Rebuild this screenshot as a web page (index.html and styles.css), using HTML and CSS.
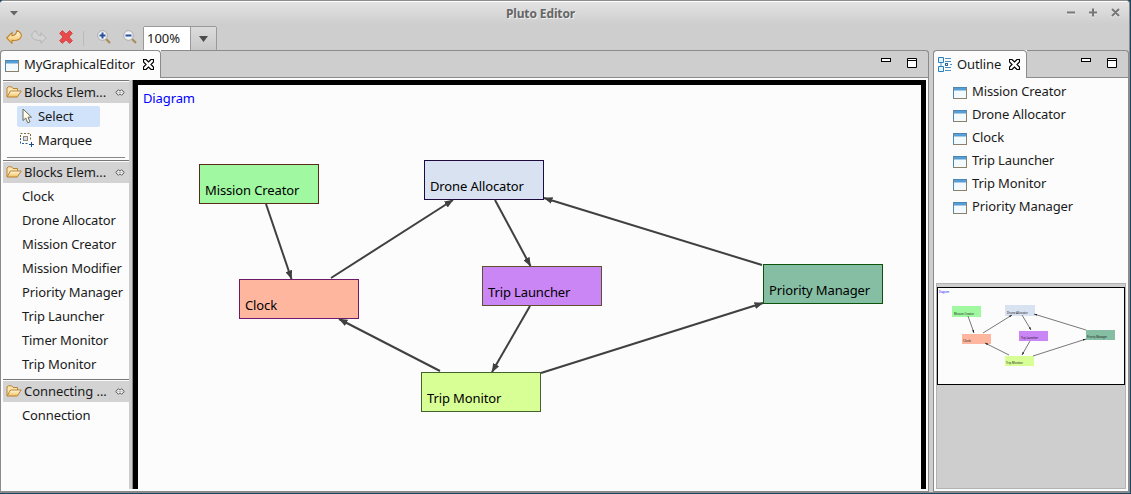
FILE: index.html
```html
<!DOCTYPE html>
<html lang="en">
<head>
<meta charset="utf-8">
<title>Pluto Editor</title>
<link rel="stylesheet" href="styles.css">
</head>
<body>
<svg class="defs" width="0" height="0">
  <defs>
    <linearGradient id="gold" x1="0" y1="0" x2="0" y2="1"><stop offset="0" stop-color="#fffbe8"/><stop offset="1" stop-color="#f3bf57"/></linearGradient>
    <symbol id="i-window" viewBox="0 0 14 12">
      <rect x=".5" y=".5" width="13" height="11" fill="#f3fafe" stroke="#8b8168"/>
      <path d="M.5 12V3M0 .5H14" stroke="#4b86b4" fill="none"/>
      <path d="M1 1.5H13M1 2.5H13" stroke="#559fd8"/>
      <path d="M1 3.5H13" stroke="#aac9e2"/>
      <path d="M0 11.5H14" stroke="#8b8168"/>
    </symbol>
    <symbol id="i-close" viewBox="0 0 11 11">
      <path d="M.5 .5H3L5.500 3 8 .5H10.500V3L8 5.500 10.500 8V10.500H8L5.500 8 3 10.500H.5V8L3 5.500 .5 3Z" fill="#fff" stroke="#000" stroke-width="1.200"/>
    </symbol>
    <symbol id="i-folder" viewBox="0 0 16 12">
      <path d="M1 10.500V2L2.200 .8H5.600L7 2.500H11.500V5" fill="#fbe6ae" stroke="#b98135"/>
      <path d="M1 11L4.500 5H15.200L11.300 11Z" fill="url(#gold)" stroke="#b98135"/>
    </symbol>
    <symbol id="i-pin" viewBox="0 0 10 7">
      <path d="M3.500 .8L.7 3.500 3.500 6.200 5 4.700 6.500 6.200 9.300 3.500 6.500 .8 5 2.300Z" fill="#fff" stroke="#4a4a4a"/>
      <path d="M2.500 3.500H7.500" fill="none" stroke="#999" stroke-width=".6"/>
    </symbol>
    <symbol id="i-min" viewBox="0 0 10 4"><rect x=".5" y=".5" width="9" height="3" fill="#fff" stroke="#000"/></symbol>
    <symbol id="i-max" viewBox="0 0 10 10"><path d="M.5 .5H9.500V9.500H.5ZM0 2.500H10" fill="#fff" stroke="#000"/></symbol>
    <marker id="arrow" viewBox="0 0 9 7" refX="8.500" refY="3.500" markerWidth="9" markerHeight="7" markerUnits="userSpaceOnUse" orient="auto"><path d="M0 0L9 3.500 0 7Z" fill="#404040"/></marker>
    <marker id="tip" viewBox="0 0 3 2" refX="3" refY="1" markerWidth="3" markerHeight="2" markerUnits="userSpaceOnUse" orient="auto"><path d="M0 0L3 1 0 2Z" fill="#222"/></marker>
  </defs>
</svg>
<div class="window">
  <header class="titlebar">
    <svg class="window-menu" width="8" height="5" viewBox="0 0 8 5"><path d="M0 0H8L4 4.500Z" fill="#666"/></svg>
    <h1 class="title">Pluto Editor</h1>
    <svg class="controls" width="53" height="9" viewBox="0 0 53 9"><path d="M0 4.500H8M22 4.500H30M26 .5V8.500M45 1L52 8M52 1L45 8" stroke="#eee" transform="translate(0 1)" stroke-width="2"/><path d="M0 4.500H8M22 4.500H30M26 .5V8.500M45 1L52 8M52 1L45 8" stroke="#777" stroke-width="2"/></svg>
  </header>
  <div class="toolbar">
    <svg class="undo" width="16" height="14" viewBox="0 0 16 14"><path d="M.7 8L6 2.700V5.700C8.900 5.500 10.500 3.700 10.900 .6C14.300 1.600 16.200 4.800 14.800 7.400C13.300 10 9.500 10.700 6 10.300V13.300Z" fill="url(#gold)" stroke="#bd842c" stroke-width="1.100"/></svg>
    <svg class="redo" width="16" height="14" viewBox="0 0 16 14"><path d="M15.300 8L10 2.700V5.700C7.100 5.500 5.500 3.700 5.100 .6C1.700 1.600-.2 4.800 1.200 7.400C2.700 10 6.500 10.700 10 10.300V13.300Z" fill="#d3d3d3" stroke="#b5b5b5"/></svg>
    <svg class="delete" width="14" height="14" viewBox="0 0 14 14"><path d="M3.300 .7L7 4.200 10.700 .7 13.300 3.300 9.800 7 13.300 10.700 10.700 13.300 7 9.800 3.300 13.300 .7 10.700 4.200 7 .7 3.300Z" fill="#e84b4b" stroke="#d83a3d"/></svg>
    <span class="tool-sep"></span>
    <svg class="zoom-in" width="14" height="14" viewBox="0 0 14 14"><path d="M9 9L13 13" stroke="#a78d58" stroke-width="2.200"/><circle cx="5.500" cy="5.500" r="4.800" fill="#f1f5fb" stroke="#a9a9a0"/><path d="M2.500 5.500H8.500M5.500 2.500V8.500" stroke="#2c4f9e" stroke-width="2"/></svg>
    <svg class="zoom-out" width="14" height="14" viewBox="0 0 14 14"><path d="M9 9L13 13" stroke="#a78d58" stroke-width="2.200"/><circle cx="5.500" cy="5.500" r="4.800" fill="#f1f5fb" stroke="#a9a9a0"/><path d="M2.500 5.500H8.500" stroke="#2c4f9e" stroke-width="2"/></svg>
    <div class="combo"><span class="combo-value">100%</span><span class="combo-button"><svg width="9" height="6" viewBox="0 0 9 6"><path d="M0 0H9L4.500 6Z" fill="#4c4c4c"/></svg></span></div>
  </div>
  <main class="workbench">
    <section class="part editor">
      <div class="tabs">
        <div class="tab"><svg width="14" height="12"><use href="#i-window"/></svg><span class="tab-label">MyGraphicalEditor</span><svg width="11" height="11"><use href="#i-close"/></svg></div>
        <div class="tab-rest"><svg class="min" width="10" height="4"><use href="#i-min"/></svg><svg class="max" width="10" height="10"><use href="#i-max"/></svg></div>
      </div>
      <div class="editor-body">
        <nav class="palette">
          <section class="drawer first">
            <h2 class="drawer-head"><svg width="16" height="12"><use href="#i-folder"/></svg><span class="drawer-name">Blocks Elem...</span><svg width="10" height="7"><use href="#i-pin"/></svg></h2>
            <div class="tool selected"><svg width="11" height="16" viewBox="0 0 11 16"><path d="M1 1V12.500L3.700 10L5.700 14.800 8 13.800 6 9.200H9.500Z" fill="#fffdf0" stroke="#6d6955"/></svg><span>Select</span></div>
            <div class="tool marquee"><svg width="16" height="16" viewBox="0 0 16 16"><path d="M1.500 5V1.500H11.500V9" fill="none" stroke="#7d682c" stroke-dasharray="2 1.500"/><path d="M1.500 6V11.500H9" fill="none" stroke="#285d93" stroke-dasharray="2 1.500"/><rect x="4.500" y="4.500" width="4" height="4" fill="#dedede" stroke="#8b8b87"/><path d="M10 12.500H15M12.500 10V15" stroke="#164f86"/></svg><span>Marquee</span></div>
          </section>
          <section class="drawer">
            <h2 class="drawer-head"><svg width="16" height="12"><use href="#i-folder"/></svg><span class="drawer-name">Blocks Elem...</span><svg width="10" height="7"><use href="#i-pin"/></svg></h2>
            <ul class="entries"><li>Clock</li><li>Drone Allocator</li><li>Mission Creator</li><li>Mission Modifier</li><li>Priority Manager</li><li>Trip Launcher</li><li>Timer Monitor</li><li>Trip Monitor</li></ul>
          </section>
          <section class="drawer">
            <h2 class="drawer-head"><svg width="16" height="12"><use href="#i-folder"/></svg><span class="drawer-name">Connecting ...</span><svg width="10" height="7"><use href="#i-pin"/></svg></h2>
            <ul class="entries"><li>Connection</li></ul>
          </section>
        </nav>
        <div class="sash"></div>
        <div class="canvas">
          <span class="canvas-title">Diagram</span>
          <div class="node mission">Mission Creator</div>
          <div class="node drone">Drone Allocator</div>
          <div class="node clock">Clock</div>
          <div class="node launcher">Trip Launcher</div>
          <div class="node priority">Priority Manager</div>
          <div class="node monitor">Trip Monitor</div>
          <svg class="links" viewBox="138 85 783 404" width="783" height="404"><g stroke="#404040" stroke-width="2" marker-end="url(#arrow)"><path d="M266 204L291.500 279"/><path d="M331 278L453 200"/><path d="M495 200L530.500 266"/><path d="M530 306L492 372"/><path d="M440 371L339 319"/><path d="M541 373L763 303"/><path d="M762 265L544 198"/></g></svg>
        </div>
      </div>
    </section>
    <aside class="part outline">
      <div class="tabs">
        <div class="tab"><svg width="14" height="15" viewBox="0 0 14 15"><path d="M.5 .5H5.500V5.500H.5ZM.5 9.500H5.500V14.500H.5Z" fill="#e4f4ff" stroke="#2c7fbb"/><path d="M7 1.500H13M7 4.500H13M7 10.500H13M7 13.500H13M3 6V9M12 7.500H14" stroke="#4a90c4"/><rect x="7.500" y="6.500" width="2" height="2" fill="#fff" stroke="#1f6ca8"/></svg><span class="tab-label">Outline</span><svg width="11" height="11"><use href="#i-close"/></svg></div>
        <div class="tab-rest"><svg class="min" width="10" height="4"><use href="#i-min"/></svg><svg class="max" width="10" height="10"><use href="#i-max"/></svg></div>
      </div>
      <ul class="tree">
        <li><svg width="14" height="12"><use href="#i-window"/></svg>Mission Creator</li>
        <li><svg width="14" height="12"><use href="#i-window"/></svg>Drone Allocator</li>
        <li><svg width="14" height="12"><use href="#i-window"/></svg>Clock</li>
        <li><svg width="14" height="12"><use href="#i-window"/></svg>Trip Launcher</li>
        <li><svg width="14" height="12"><use href="#i-window"/></svg>Trip Monitor</li>
        <li><svg width="14" height="12"><use href="#i-window"/></svg>Priority Manager</li>
      </ul>
      <div class="overview">
        <svg class="thumb" viewBox="938 288 186 96" width="186" height="96">
          <rect x="952" y="306" width="29" height="11" fill="#a0f8a0"/><rect x="1005" y="305" width="30" height="11" fill="#d8e2f0"/><rect x="962" y="334" width="29" height="10" fill="#ffb69e"/><rect x="1019" y="331" width="29" height="10" fill="#ca86f4"/><rect x="1086" y="330" width="29" height="10" fill="#86bea4"/><rect x="1005" y="356" width="29" height="10" fill="#d8ff96"/>
          <g stroke="#555" stroke-width=".8" marker-end="url(#tip)"><path d="M968 316L974 333"/><path d="M983 333L1012 315"/><path d="M1022 315L1031 330"/><path d="M1030 341L1022 355"/><path d="M1009 355L985 343"/><path d="M1033 356L1086 339"/><path d="M1086 330L1034 314"/></g>
          <g class="thumb-text"><text class="thumb-title" x="939" y="293" textLength="10" lengthAdjust="spacingAndGlyphs">Diagram</text><text x="954" y="315" textLength="20" lengthAdjust="spacingAndGlyphs">Mission Creator</text><text x="1007" y="314" textLength="21" lengthAdjust="spacingAndGlyphs">Drone Allocator</text><text x="963" y="342" textLength="8" lengthAdjust="spacingAndGlyphs">Clock</text><text x="1021" y="339" textLength="17" lengthAdjust="spacingAndGlyphs">Trip Launcher</text><text x="1087" y="338" textLength="20" lengthAdjust="spacingAndGlyphs">Priority Manager</text><text x="1006" y="364" textLength="17" lengthAdjust="spacingAndGlyphs">Trip Monitor</text></g>
        </svg>
      </div>
    </aside>
  </main>
</div>
</body>
</html>
```

FILE: styles.css
```css
* { box-sizing: border-box; }
body { margin: 0; width: 1131px; height: 494px; overflow: hidden; background: #1b4662; font: 13px/20px "Noto Sans", "Open Sans", sans-serif; letter-spacing: -.12px; color: #1a1a1a; }
svg { display: block; flex: none; }
.defs { position: absolute; }
ul, h1, h2 { margin: 0; padding: 0; list-style: none; font: inherit; }
.window { width: 1130px; height: 493px; display: flex; flex-direction: column; background: #cecece; border-top: 1px solid #8d8d8d; border-right: 1px solid #8b8b8b; border-bottom: 1px solid #8b8b8b; border-radius: 4px 4px 0 0; overflow: hidden; }
.titlebar { height: 25px; display: flex; align-items: center; border-top: 1px solid #fff; background: linear-gradient(#e3e3e3, #cecece 22px); padding: 0 9px 0 10px; }
.window-menu { margin-top: -1px; }
.title { flex: 1; text-align: center; font-weight: bold; font-size: 12px; line-height: 23px; color: #666; text-shadow: 1px 1px #eee; padding-right: 4px; margin-top: -2px; }
.controls { overflow: visible; margin-top: -3px; }
.toolbar { height: 24px; display: flex; align-items: center; padding-left: 6px; }
.toolbar > svg { margin-top: -2px; }
.toolbar .redo { margin-left: 9px; }
.toolbar .delete { margin-left: 12px; }
.tool-sep { width: 1px; height: 15px; background: #b9b9b9; margin: 0 13px 0 10px; }
.toolbar .zoom-out { margin-left: 12px; }
.combo { display: flex; width: 74px; height: 25px; margin-left: 6px; border: 1px solid #999; border-radius: 2px; }
.combo-value { width: 46px; background: #fff; padding-left: 3px; line-height: 22px; letter-spacing: 0; }
.combo-button { flex: 1; display: flex; align-items: center; justify-content: center; padding-top: 2px; border-left: 1px solid #999; background: linear-gradient(#dcdcdc, #c8c8c8); }
.workbench { flex: 1; display: flex; gap: 4px; min-height: 0; }
.part { display: flex; flex-direction: column; border: 1px solid #8b8b8b; border-top: 0; background: #fcfcfc; border-radius: 4px 4px 0 0; }
.editor { width: 929px; }
.outline { width: 196px; }
.tabs { display: flex; height: 28px; margin: 0 -1px; flex: none; }
.tab { display: flex; align-items: center; border: 1px solid #8b8b8b; border-bottom: 0; border-radius: 4px 4px 0 0; background: #fcfcfc; }
.editor .tab { width: 161px; padding: 2px 0 0 4px; }
.outline .tab { width: 94px; padding-left: 4px; }
.tab-label { margin: 0 8px 0 5px; }
.editor .tab-label { margin-top: -3px; }
.outline .tab-label { margin-top: -1px; }
.editor .tab svg:last-child { margin-top: -3px; }
.outline .tab svg:last-child { margin-top: -1px; }
.tab-rest { flex: 1; display: flex; justify-content: flex-end; gap: 16px; padding: 7px 11px 0 0; background: #cecece; border: 1px solid #8b8b8b; border-left: 0; border-radius: 0 4px 0 0; }
.editor-body { flex: 1; display: flex; padding: 2px; min-height: 0; }
.palette { width: 126px; }
.drawer { border-top: 1px solid #777; padding-top: 1px; }
.drawer.first { height: 80px; }
.drawer-head { display: flex; align-items: center; height: 21px; padding: 0 4px 2px 3px; background: #d3d3d3; }
.drawer-head svg:last-child { margin-top: 2px; }
.drawer-name { flex: 1; margin-left: 2px; white-space: nowrap; letter-spacing: -.06px; }
.tool { display: flex; align-items: center; width: 83px; height: 21px; margin: 3px 0 0 14px; padding: 0 0 2px 5px; border-radius: 2px; }
.tool.selected { background: #d0e3fa; }
.tool.selected span { margin-left: 5px; }
.tool.marquee { padding-left: 2px; width: 90px; }
.tool.marquee span { margin-left: 3px; }
.drawer.first::after { content: ""; display: block; height: 1px; background: #888; margin: 6px 4px 0; }
.entries { padding: 1px 0 3px 19px; line-height: 24px; white-space: nowrap; }
.sash { width: 4px; background: #cecece; border-right: 1px solid #888; }
.canvas { position: relative; flex: 1; border: 5px solid #000; border-bottom: 0; background: #fcfcfc; }
.canvas-title { display: block; padding: 3px 5px; color: #00f; }
.links { position: absolute; left: 0; top: 0; }
.node { position: absolute; width: 120px; height: 40px; border: 1px solid; padding: 15px 0 0 5px; white-space: nowrap; color: #000; }
.mission { left: 61px; top: 79px; background: #a0f8a0; border-color: #5b2a17; }
.drone { left: 286px; top: 75px; background: #d8e2f0; border-color: #1c0a40; }
.clock { left: 101px; top: 194px; background: #ffb69e; border-color: #6d1a6d; }
.launcher { left: 344px; top: 181px; background: #ca86f4; border-color: #5f5030; }
.priority { left: 625px; top: 179px; background: #86bea4; border-color: #0b540b; }
.monitor { left: 283px; top: 287px; background: #d8ff96; border-color: #44602c; }
.tree { flex: 1; padding: 2px 0 0 19px; line-height: 23px; }
.tree li { display: flex; align-items: center; gap: 5px; height: 23px; }
.tree svg { margin-top: 2px; }
.overview { height: 206px; margin: 0 2px 2px; padding: 3px 0 0 0; background: #cecece; border: 1px solid #b3b3b3; }
.thumb { box-sizing: content-box; border: 1px solid #000; background: #fcfcfc; }
.thumb-text { font: 3.600px "Noto Sans", sans-serif; letter-spacing: 0; fill: #111; }
.thumb-title { fill: #00f; }
```
